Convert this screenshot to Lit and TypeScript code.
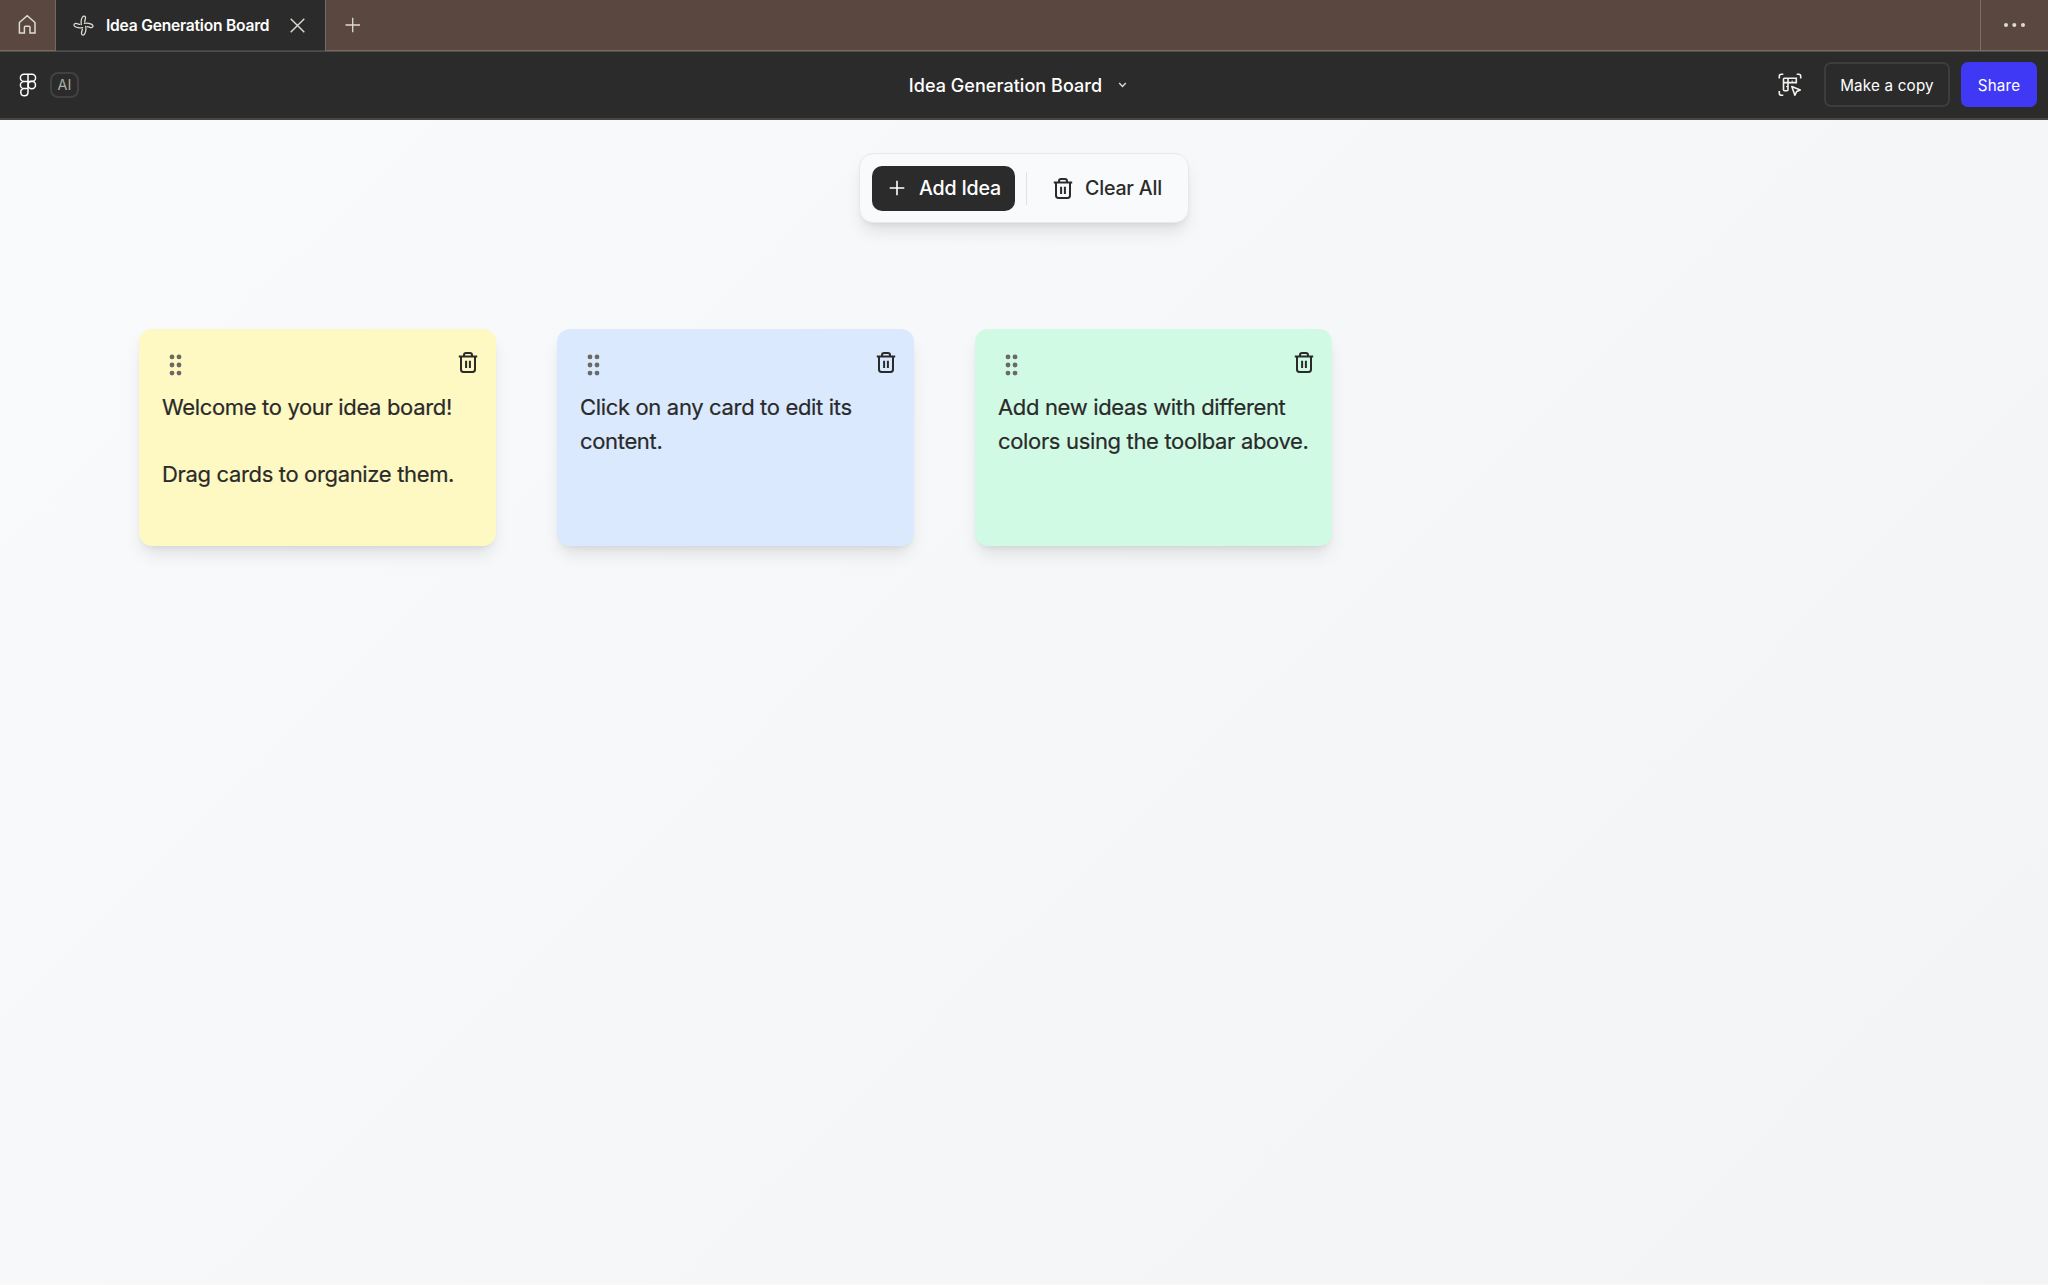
import { LitElement, html, svg, css } from "lit";
import { customElement, property } from "lit/decorators.js";

const trash = html`<svg class="trash" width="20" height="23" viewBox="0 0 20 23" fill="none" stroke="currentColor" stroke-width="2">
  <path d="M.8 5.4H19.2M6 5.4V4Q6 1.9 8.1 1.9H11.9Q14 1.9 14 4V5.4M3 5.4V18.6Q3 21 5.4 21H14.6Q17 21 17 18.6V5.4M8.1 9.8V17M11.9 9.8V17"/>
</svg>`;

@customElement("idea-card")
export class IdeaCard extends LitElement {
  @property() text = "";
  @property({ reflect: true }) tone = "yellow";

  static styles = css`
    :host { display: block; box-sizing: border-box; width: 357px; height: 217px; padding: 18px 18px 0 23px;
      border-radius: 13px; background: #fef8c3; color: #2a2a2a;
      box-shadow: 0 11px 17px -3px rgba(0,0,0,.1), 0 4px 7px -4px rgba(0,0,0,.1); }
    :host([tone="blue"]) { background: #dae9fe; }
    :host([tone="green"]) { background: #d0fae4; }
    .head { display: flex; justify-content: space-between; height: 44px; }
    .grip { margin: 7px 0 0 6px; display: block; }
    .trash { display: block; margin-top: 4px; }
    .text { margin: 0 -6px 0 0; white-space: pre-line; font: 400 22px/33.5px Inter, sans-serif; letter-spacing: -0.34px; -webkit-text-stroke: .2px currentColor; }
  `;

  render() {
    return html`<div class="head">
        <svg class="grip" width="14" height="23" viewBox="0 0 14 23" fill="#6b6963">
          ${[2.9, 11, 19.1].map(y => [4, 11].map(x => svg`<circle cx=${x} cy=${y} r="2.4"/>`))}
        </svg>
        ${trash}
      </div>
      <p class="text">${this.text}</p>`;
  }
}

@customElement("app-root")
export class AppRoot extends LitElement {
  private ideas = [
    { tone: "yellow", text: "Welcome to your idea board!\n\nDrag cards to organize them." },
    { tone: "blue", text: "Click on any card to edit its content." },
    { tone: "green", text: "Add new ideas with different colors using the toolbar above." },
  ];

  static styles = css`
    :host { display: flex; flex-direction: column; width: 2048px; height: 1285px; overflow: hidden;
      font-family: Inter, sans-serif; color: #fff; }
    * { box-sizing: border-box; }
    svg { display: block; flex: none; }
    .tabs { display: flex; height: 52px; flex: none; background: #5a4840; border-bottom: 1px solid #544c47; color: #dcdcd2; }
    .home { width: 56px; height: 51px; padding: 14px 0 0 18px; border-right: 1px solid #736b62; border-bottom: 1px solid #736b62; }
    .tab { display: flex; align-items: center; width: 269px; height: 51px; padding-left: 17px; background: #2b2b2b; border-bottom: 1px solid #444; }
    .name { width: 184px; margin-left: 12px; font-size: 15.6px; font-weight: 600; letter-spacing: -0.22px; color: #fff; white-space: nowrap; }
    .add { flex: 1; height: 51px; padding: 17px 0 0 18px; border-left: 1px solid #736b62; border-bottom: 1px solid #736b62; }
    .more { width: 68px; height: 51px; padding: 22px 0 0 22px; border-left: 1px solid #78706a; border-bottom: 1px solid #736b62; }
    .bar { display: grid; grid-template-columns: 1fr auto 1fr; align-items: center; height: 68px; flex: none;
      padding: 0 11px 0 19px; background: #2b2b2b; border-bottom: 2px solid #4a4542; }
    .left { display: flex; align-items: center; gap: 13px; }
    .ai { width: 29px; height: 26px; border: 2px solid #414141; border-radius: 8px; font-size: 14.4px; line-height: 22px; text-align: center; color: #aeaea8; }
    .title { display: flex; align-items: center; gap: 16px; font-size: 18px; font-weight: 500; letter-spacing: .05px; margin-right: 20px; }
    .right { display: flex; align-items: center; justify-content: flex-end; }
    .btn { display: flex; align-items: center; justify-content: center; height: 45px; border-radius: 7px; font-size: 15.2px; letter-spacing: .2px; margin-bottom: 1px; padding-top: 2px; }
    .copy { width: 126px; margin: 0 11px 1px 22px; border: 2px solid #3d3d3d; }
    .share { width: 76px; background: #3f39f5; }
    .canvas { flex: 1; padding-top: 33px; background: linear-gradient(135deg, #f9fafb, #f3f4f6); border-bottom: 1px solid #f9f9fa; }
    .toolbar { display: flex; align-items: center; width: 330px; height: 70px; margin: 0 auto; padding: 0 10px 0 12px;
      border: 1.5px solid #e7e8ea; border-radius: 14px; background: #f9fafb; color: #2b2b2b;
      box-shadow: 0 11px 17px -3px rgba(0,0,0,.1), 0 4px 7px -4px rgba(0,0,0,.1); font-size: 19.6px; font-weight: 500; letter-spacing: -.2px; }
    .primary { display: flex; align-items: center; gap: 14px; width: 143px; height: 45px; padding-left: 17px; border-radius: 10px;
      background: #2b2b2b; color: #fff; white-space: nowrap; }
    .rule { width: 1px; height: 33px; margin: 0 26px 0 11px; background: #e2e3e5; }
    .clear { display: flex; align-items: center; gap: 12px; white-space: nowrap; }
    .ideas { display: flex; gap: 61px; padding: 106px 0 0 139px; }
  `;

  render() {
    return html`
      <div class="tabs">
        <div class="home"><svg width="19" height="21" viewBox="0 0 19 21" fill="none" stroke="currentColor" stroke-width="1.5"><path d="M1.4 8.5L9.2 1.8L17 8.5V19H12V13.2Q12 12.2 11 12.2H7.4Q6.4 12.2 6.4 13.2V19H1.4Z"/></svg></div>
        <div class="tab">
          <svg width="21" height="21" viewBox="0 0 21 21" fill="none" stroke="currentColor" stroke-width="1.25" stroke-linecap="round">
            ${[0, 90, 180, 270].map(a => svg`<path transform="rotate(${a} 10.5 10.5)" d="M8.3 9.6C8 8.2 8 6.8 8.3 5.2C8.8 2.6 9.7 1 11 1C12.5 1 12.8 2.6 12.3 4.2C12 5.4 11.7 6 11.6 6.8"/>`)}
          </svg>
          <span class="name">Idea Generation Board</span>
          <svg width="15" height="15" viewBox="0 0 15 15" stroke="currentColor" stroke-width="1.4"><path d="M.7 .7L14.3 14.3M14.3 .7L.7 14.3"/></svg>
        </div>
        <div class="add"><svg width="17" height="16" viewBox="0 0 17 16" stroke="currentColor" stroke-width="1.3"><path d="M1.5 8H16M8.7 .7V15.3"/></svg></div>
        <div class="more"><svg width="24" height="6" fill="currentColor"><circle cx="3" cy="3" r="2"/><circle cx="11.3" cy="3" r="2"/><circle cx="20" cy="3" r="2"/></svg></div>
      </div>
      <div class="bar">
        <div class="left">
          <svg width="18" height="24" viewBox="0 0 18 24" fill="none" stroke="#fff" stroke-width="1.5"><path d="M9 1.2H5A3.6 3.6 0 0 0 5 8.4H9ZM9 1.2H13A3.6 3.6 0 0 1 13 8.4H9ZM9 8.4H5A3.6 3.6 0 0 0 5 15.6H9ZM9 15.6H5A3.6 3.6 0 1 0 9 19.2Z"/><circle cx="12.8" cy="12" r="3.7"/></svg>
          <div class="ai">AI</div>
        </div>
        <div class="title"><span>Idea Generation Board</span><svg width="9" height="6" viewBox="0 0 9 6" fill="none" stroke="#ddd" stroke-width="1.4"><path d="M1.2 1L4.5 4.4L7.8 1"/></svg></div>
        <div class="right">
          <svg width="24" height="24" viewBox="0 0 24 24" fill="none" stroke="#f2f2ee" stroke-width="1.6">
            <path d="M1.3 5.5V3.2Q1.3 1.2 3.3 1.2H5.3M18.7 1.2H20.7Q22.7 1.2 22.7 3.2V5.5M1.3 18V20.3Q1.3 22.3 3.3 22.3H5.3"/>
            <path d="M6.2 5.2H18.3V9.6H10V16.8Q10 17.8 9 17.8H6.5Q5.5 17.8 5.5 16.8V6Q5.5 5.2 6.2 5.2ZM5.5 9.6H10V5.2"/>
            <path d="M14.2 7.6V9.6M8 13.6H10" stroke-width="1"/>
            <path d="M13.8 13.6L22.3 16.9L18.7 18.5L16.9 22.2Z" stroke-linejoin="round"/>
          </svg>
          <div class="btn copy">Make a copy</div>
          <div class="btn share">Share</div>
        </div>
      </div>
      <div class="canvas">
        <div class="toolbar">
          <div class="primary"><svg width="16" height="16" viewBox="0 0 16 16" stroke="#fff" stroke-width="1.6"><path d="M.7 8H15.3M8 .7V15.3"/></svg><span>Add Idea</span></div>
          <div class="rule"></div>
          <div class="clear">${trash}<span>Clear All</span></div>
        </div>
        <div class="ideas">${this.ideas.map(i => html`<idea-card tone=${i.tone} .text=${i.text}></idea-card>`)}</div>
      </div>`;
  }
}
